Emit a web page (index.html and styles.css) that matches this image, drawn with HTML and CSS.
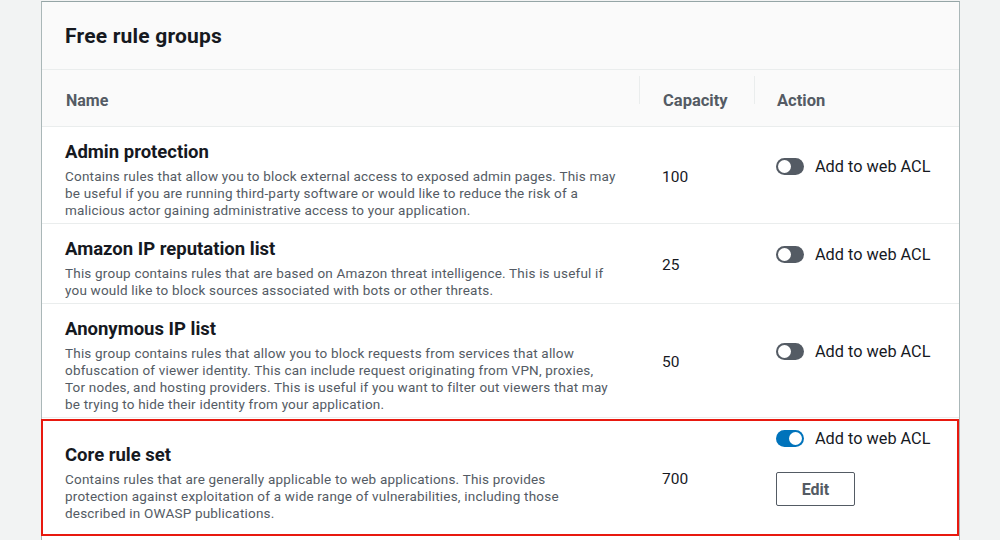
FILE: index.html
```html
<!DOCTYPE html>
<html lang="en">
<head>
<meta charset="utf-8">
<title>Free rule groups</title>
<link rel="stylesheet" href="styles.css">
</head>
<body>
<div class="panel">
  <div class="panel-header"><h2>Free rule groups</h2></div>
  <div class="row head">
    <div class="th name-col">Name</div>
    <div class="th cap-col"><span class="sep"></span>Capacity</div>
    <div class="th act-col"><span class="sep"></span>Action</div>
  </div>

  <div class="row">
    <div class="cell name-cell">
      <div class="title">Admin protection</div>
      <div class="desc">Contains rules that allow you to block external access to exposed admin pages. This may<br>be useful if you are running third-party software or would like to reduce the risk of a<br>malicious actor gaining administrative access to your application.</div>
    </div>
    <div class="cell cap-cell">100</div>
    <div class="cell act-cell">
      <div class="toggle-line"><span class="toggle"></span><span class="label">Add to web ACL</span></div>
    </div>
  </div>

  <div class="row">
    <div class="cell name-cell">
      <div class="title">Amazon IP reputation list</div>
      <div class="desc">This group contains rules that are based on Amazon threat intelligence. This is useful if<br>you would like to block sources associated with bots or other threats.</div>
    </div>
    <div class="cell cap-cell">25</div>
    <div class="cell act-cell">
      <div class="toggle-line"><span class="toggle"></span><span class="label">Add to web ACL</span></div>
    </div>
  </div>

  <div class="row">
    <div class="cell name-cell">
      <div class="title">Anonymous IP list</div>
      <div class="desc">This group contains rules that allow you to block requests from services that allow<br>obfuscation of viewer identity. This can include request originating from VPN, proxies,<br>Tor nodes, and hosting providers. This is useful if you want to filter out viewers that may<br>be trying to hide their identity from your application.</div>
    </div>
    <div class="cell cap-cell">50</div>
    <div class="cell act-cell">
      <div class="toggle-line"><span class="toggle"></span><span class="label">Add to web ACL</span></div>
    </div>
  </div>

  <div class="row selected">
    <div class="cell name-cell">
      <div class="title">Core rule set</div>
      <div class="desc">Contains rules that are generally applicable to web applications. This provides<br>protection against exploitation of a wide range of vulnerabilities, including those<br>described in OWASP publications.</div>
    </div>
    <div class="cell cap-cell">700</div>
    <div class="cell act-cell">
      <div class="toggle-line"><span class="toggle on"></span><span class="label">Add to web ACL</span></div>
      <button class="btn">Edit</button>
    </div>
  </div>
</div>
</body>
</html>
```

FILE: styles.css
```css
html, body {
  margin: 0;
  padding: 0;
  height: 100%;
  overflow: hidden;
}
body {
  background: #f2f3f3;
  font-family: Roboto, "Liberation Sans", sans-serif;
  color: #16191f;
}
.panel {
  margin: 1px 0 0 41px;
  width: 917px;
  border: 1px solid #aab7b8;
  border-top: 1px solid #95a5a6;
  background: #ffffff;
  min-height: 600px;
}
.panel-header {
  background: #fafafa;
  height: 67px;
  border-bottom: 1px solid #eaeded;
  display: flex;
  align-items: center;
  padding-left: 23px;
}
.panel-header h2 {
  margin: 0;
  font-size: 21px;
  font-weight: 700;
  letter-spacing: 0.2px;
  color: #16191f;
  padding-top: 1px;
}
.row {
  display: grid;
  grid-template-columns: 597px 115px 1fr;
  align-items: center;
  border-bottom: 1px solid #eaeded;
}
.row.head {
  background: #fafafa;
  height: 56px;
}
.th {
  position: relative;
  font-size: 16.5px;
  font-weight: 700;
  color: #545b64;
  padding-top: 4px;
}
.name-col { padding-left: 24px; font-size: 16px; }
.cap-col { padding-left: 24px; }
.act-col { padding-left: 23px; }
.sep {
  position: absolute;
  left: 0;
  top: -11px;
  height: 28px;
  width: 1px;
  background: #eaeded;
}
.name-cell {
  padding: 13px 0 4px 23px;
}
.title {
  font-size: 18.5px;
  font-weight: 700;
  line-height: 24px;
  color: #16191f;
}
.desc {
  margin-top: 4px;
  font-size: 13.5px;
  letter-spacing: 0.2px;
  line-height: 17px;
  color: #545b64;
  white-space: nowrap;
}
.cap-cell {
  padding-left: 23px;
  padding-top: 3px;
  font-size: 15.5px;
  color: #16191f;
}
.act-cell {
  padding: 8px 0 4px 22px;
}
.act-cell::after {
  content: "";
  display: block;
  height: 22px;
}
.toggle-line {
  display: flex;
  align-items: center;
  height: 20px;
}
.toggle {
  position: relative;
  width: 28px;
  height: 17px;
  border-radius: 9px;
  background: #545b64;
  box-sizing: border-box;
  flex: none;
}
.toggle::after {
  content: "";
  position: absolute;
  left: 2px;
  top: 2px;
  width: 13px;
  height: 13px;
  border-radius: 50%;
  background: #ffffff;
}
.toggle.on { background: #0073bb; }
.toggle.on::after { left: 13px; }
.label {
  margin-left: 11px;
  font-size: 16.3px;
  color: #16191f;
}
.btn {
  margin-top: 24px;
  width: 79px;
  height: 34px;
  border: 1px solid #545b64;
  border-radius: 2px;
  background: #ffffff;
  font-family: Roboto, "Liberation Sans", sans-serif;
  font-size: 16px;
  font-weight: 700;
  color: #545b64;
  padding: 0;
}
.row.selected {
  grid-template-columns: 596px 115px 1fr;
  border: 2px solid #e8190f;
  margin-left: -1px;
  margin-top: 1px;
}
.row.selected .name-cell {
  padding-left: 22px;
}
.row.selected .act-cell {
  padding-top: 7px;
  padding-bottom: 6px;
}
```
